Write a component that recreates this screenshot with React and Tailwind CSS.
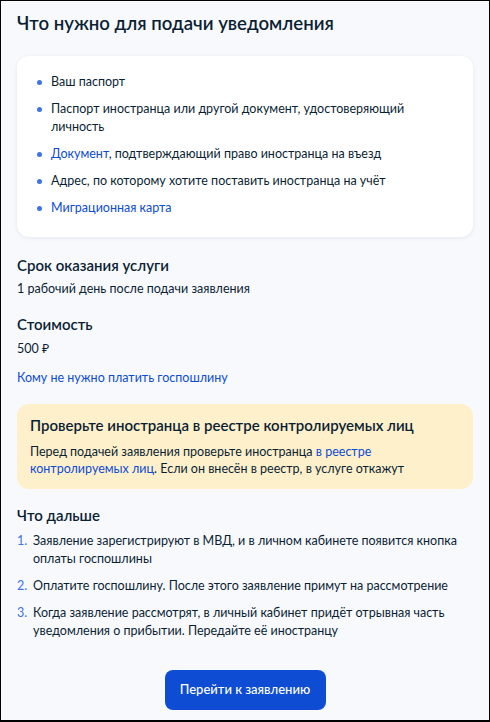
import React from "react";

const docs = [
  { text: "Ваш паспорт" },
  { text: "Паспорт иностранца или другой документ, удостоверяющий личность" },
  { link: "Документ", text: ", подтверждающий право иностранца на въезд" },
  { text: "Адрес, по которому хотите поставить иностранца на учёт" },
  { link: "Миграционная карта" },
];

const steps = [
  "Заявление зарегистрируют в МВД, и в личном кабинете появится кнопка оплаты госпошлины",
  "Оплатите госпошлину. После этого заявление примут на рассмотрение",
  "Когда заявление рассмотрят, в личный кабинет придёт отрывная часть уведомления о прибытии. Передайте её иностранцу",
];

function App() {
  return (
    <div
      className="w-[490px] h-[722px] overflow-hidden border border-b-2 border-black bg-[#f8f9fd] text-[#0b1f33]"
      style={{ fontFamily: "Lato, 'Noto Sans', sans-serif" }}
    >
      <div className="px-4 pt-[9px]">
        <h1 className="text-[18.6px] leading-[26px] font-semibold">
          Что нужно для подачи уведомления
        </h1>

        <div className="mt-[20px] bg-white rounded-xl shadow-[0_1px_4px_rgba(11,31,51,0.08)] pl-[20px] pr-4 pt-[17px] pb-[20px]">
          <ul className="flex flex-col gap-[9px]">
            {docs.map((d, i) => (
              <li key={i} className="flex text-[12.5px] leading-[18px]">
                <span className="w-[5px] h-[5px] rounded-full bg-[#3d73e8] mt-[7px] mr-[9px] shrink-0" />
                <span>
                  {d.link && <span className="text-[#0d4cd3]">{d.link}</span>}
                  {d.text}
                </span>
              </li>
            ))}
          </ul>
        </div>

        <h2 className="mt-[17px] text-[15px] leading-[22px] font-semibold">
          Срок оказания услуги
        </h2>
        <p className="mt-[3px] text-[12.5px] leading-[20px]">
          1 рабочий день после подачи заявления
        </p>

        <h2 className="mt-[14px] text-[15px] leading-[22px] font-semibold">
          Стоимость
        </h2>
        <p className="mt-[4px] text-[12.5px] leading-[20px]">500 ₽</p>
        <p className="mt-[9px] text-[12.5px] leading-[20px] text-[#0d4cd3]">
          Кому не нужно платить госпошлину
        </p>

        <div className="mt-[16px] rounded-xl bg-[#fef0cb] px-[13px] pt-[10px] pb-[12px]">
          <h3 className="text-[15px] leading-[22px] font-semibold">
            Проверьте иностранца в реестре контролируемых лиц
          </h3>
          <p className="mt-[7px] text-[12.5px] leading-[17px]">
            Перед подачей заявления проверьте иностранца{" "}
            <span className="text-[#0d4cd3]">в реестре контролируемых лиц</span>.
            Если он внесён в реестр, в услуге откажут
          </p>
        </div>

        <h2 className="mt-[15px] text-[15px] leading-[22px] font-semibold">
          Что дальше
        </h2>
        <ol className="mt-[6px] flex flex-col gap-[9px]">
          {steps.map((s, i) => (
            <li key={i} className="flex text-[12.5px] leading-[18px]">
              <span className="w-[16px] shrink-0 text-[#3d73e8]">{i + 1}.</span>
              <span>{s}</span>
            </li>
          ))}
        </ol>

        <div className="flex justify-center mt-[30px]">
          <button className="w-[161px] h-[40px] rounded-lg bg-[#0d4cd3] text-white text-[13px] font-medium">
            Перейти к заявлению
          </button>
        </div>
      </div>
    </div>
  );
}

export default App;
